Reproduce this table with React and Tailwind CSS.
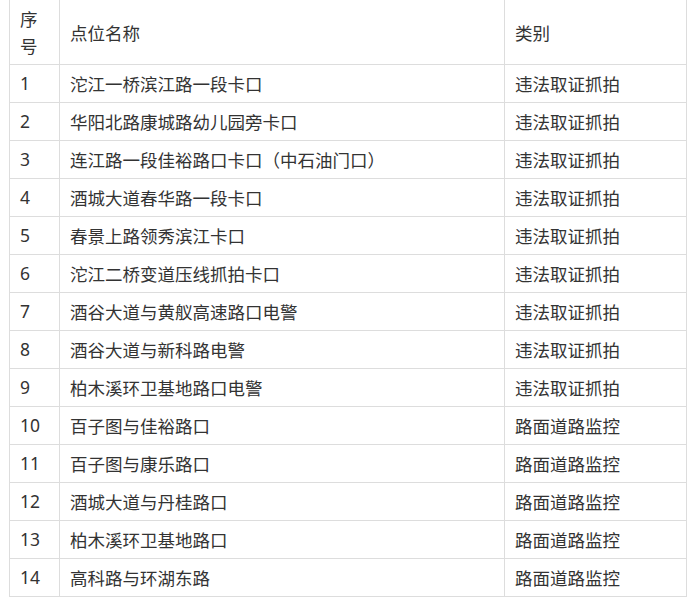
import React from "react";

const rows = [
  ["1", "沱江一桥滨江路一段卡口", "违法取证抓拍"],
  ["2", "华阳北路康城路幼儿园旁卡口", "违法取证抓拍"],
  ["3", "连江路一段佳裕路口卡口（中石油门口）", "违法取证抓拍"],
  ["4", "酒城大道春华路一段卡口", "违法取证抓拍"],
  ["5", "春景上路领秀滨江卡口", "违法取证抓拍"],
  ["6", "沱江二桥变道压线抓拍卡口", "违法取证抓拍"],
  ["7", "酒谷大道与黄舣高速路口电警", "违法取证抓拍"],
  ["8", "酒谷大道与新科路电警", "违法取证抓拍"],
  ["9", "柏木溪环卫基地路口电警", "违法取证抓拍"],
  ["10", "百子图与佳裕路口", "路面道路监控"],
  ["11", "百子图与康乐路口", "路面道路监控"],
  ["12", "酒城大道与丹桂路口", "路面道路监控"],
  ["13", "柏木溪环卫基地路口", "路面道路监控"],
  ["14", "高科路与环湖东路", "路面道路监控"],
];

const cell = "border border-[#dddddd] px-[10px] py-[5px] leading-[27px] align-middle text-left font-normal";
const cjk = "font-['Noto_Sans_CJK_SC',sans-serif]";
const latin = "font-['Noto_Sans','Noto_Sans_CJK_SC',sans-serif]";

export default function App() {
  return (
    <div className="w-[693px] h-[603px] overflow-hidden bg-white pl-[9px] text-[17.5px] text-[#333333]">
      <table className="table-fixed border-collapse w-[677px] mt-[-1px]">
        <colgroup>
          <col className="w-[50px]" />
          <col className="w-[445px]" />
          <col className="w-[182px]" />
        </colgroup>
        <thead>
          <tr>
            <th className={`${cell} ${cjk}`}>序号</th>
            <th className={`${cell} ${cjk}`}>点位名称</th>
            <th className={`${cell} ${cjk}`}>类别</th>
          </tr>
        </thead>
        <tbody>
          {rows.map((r) => (
            <tr key={r[0]}>
              <td className={`${cell} ${latin}`}>{r[0]}</td>
              <td className={`${cell} ${cjk}`}>{r[1]}</td>
              <td className={`${cell} ${cjk}`}>{r[2]}</td>
            </tr>
          ))}
        </tbody>
      </table>
    </div>
  );
}
